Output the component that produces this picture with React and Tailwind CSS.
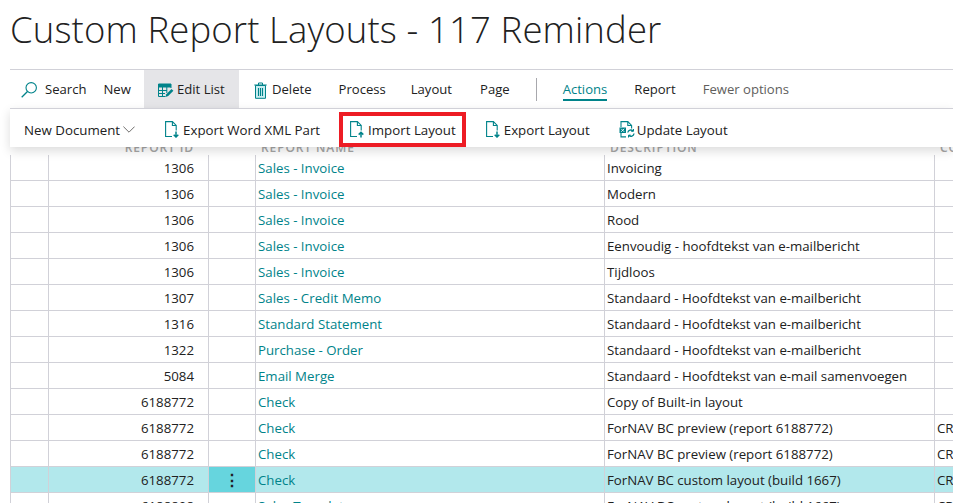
import React from 'react';

const rows = [
  ['1306', 'Sales - Invoice', 'Invoicing', ''],
  ['1306', 'Sales - Invoice', 'Modern', ''],
  ['1306', 'Sales - Invoice', 'Rood', ''],
  ['1306', 'Sales - Invoice', 'Eenvoudig - hoofdtekst van e-mailbericht', ''],
  ['1306', 'Sales - Invoice', 'Tijdloos', ''],
  ['1307', 'Sales - Credit Memo', 'Standaard - Hoofdtekst van e-mailbericht', ''],
  ['1316', 'Standard Statement', 'Standaard - Hoofdtekst van e-mailbericht', ''],
  ['1322', 'Purchase - Order', 'Standaard - Hoofdtekst van e-mailbericht', ''],
  ['5084', 'Email Merge', 'Standaard - Hoofdtekst van e-mail samenvoegen', ''],
  ['6188772', 'Check', 'Copy of Built-in layout', ''],
  ['6188772', 'Check', 'ForNAV BC preview (report 6188772)', 'CR'],
  ['6188772', 'Check', 'ForNAV BC preview (report 6188772)', 'CR'],
  ['6188772', 'Check', 'ForNAV BC custom layout (build 1667)', 'CR', true],
  ['6188808', 'Sales Template', 'ForNAV BC custom layout (build 1667)', 'CR'],
];

const SearchIcon = () => (
  <svg width="16" height="16" viewBox="0 0 16 16" fill="none" className="shrink-0 text-[#00838a]" stroke="currentColor" strokeWidth="1.100">
    <circle cx="10.200" cy="5.800" r="5.200" />
    <path d="M6.500 9.500L.7 15.300" strokeWidth="1.300" />
  </svg>
);

// page outline with a small arrow in the bottom right corner
const DocIcon = ({ up }) => (
  <svg width="14" height="17" viewBox="0 0 14 17" fill="none" className="shrink-0 text-[#00838a]" stroke="currentColor" strokeWidth="1.1">
    <path d="M7 15.500H.6V.6h6.800l3.800 3.800v5.100" />
    <path d="M7.400.8v3.700h3.700" />
    {up
      ? <path d="M11 16.500v-5M8.700 13.600L11 11.300l2.300 2.300" strokeWidth="1.500" />
      : <path d="M11 10.500v5.500M8.700 13.800L11 16l2.300-2.200" strokeWidth="1.500" />}
  </svg>
);

const UpdateIcon = () => (
  <svg width="16" height="17" viewBox="0 0 16 17" fill="none" className="shrink-0 text-[#00838a]" stroke="currentColor" strokeWidth="1.1">
    <path d="M2 6V.6h6.800l3.800 3.800v3M2 12v3.900h5" />
    <path d="M8.800.8v3.700h3.700" />
    <path d="M.5 6.500h6.500v5.500H.5z" fill="currentColor" stroke="none" />
    <path d="M2.200 7.800l3 3M5.200 7.800l-3 3" stroke="#fff" strokeWidth="0.900" />
    <path d="M8.800 11.500a3 3 0 0 1 5.200-1.500M15 12.500a3 3 0 0 1-5.200 1.800" strokeWidth="1.300" />
    <path d="M14.500 8v2.300h-2.300M9.500 16.500v-2.300h2.300" strokeWidth="1" />
  </svg>
);

const EditListIcon = () => (
  <svg width="16" height="15" viewBox="0 0 16 15" fill="none" className="shrink-0 text-[#00838a]" stroke="currentColor" strokeWidth="1">
    <path d="M.5 1h12.500v3H.5z" fill="currentColor" />
    <path d="M.5 4v9.500h7M.5 7.500h8.500M.5 10.500h6.500M4.500 4v9.500M8.800 4v6M13 4v1" />
    <path d="M7.500 14l.8-2.800 5.200-5.300 1.900 1.900-5.200 5.300z" fill="currentColor" stroke="none" />
  </svg>
);

const TrashIcon = () => (
  <svg width="13" height="17" viewBox="0 0 13 17" fill="none" className="shrink-0 text-[#00838a]" stroke="currentColor" strokeWidth="1">
    <path d="M1.500 3.500h10v12.800h-10z" fill="#c9eef1" />
    <path d="M.3 3h12.400M4.500 3V1h4v2" />
    <path d="M4.500 6v8M6.500 6v8M8.500 6v8" strokeWidth="1.100" />
  </svg>
);

const Chevron = () => (
  <svg width="12" height="7" viewBox="0 0 12 7" fill="none" className="ml-[3px] shrink-0 text-[#605e5c]" stroke="currentColor" strokeWidth="0.900">
    <path d="M.4.6L6 6.200 11.600.6" />
  </svg>
);

const Cell = ({ className = '', children }) => (
  <div className={`border-l border-[#d1d1d8] flex items-center whitespace-nowrap overflow-hidden ${className}`}>{children}</div>
);

const App = () => {
  return (
    <div className="h-[503px] w-[953px] overflow-hidden bg-white text-[#212121] text-[13.250px] font-['Open_Sans',sans-serif]">
      <h1 className="h-[69px] pl-[10px] pt-[5px] text-[36.500px] leading-[48px] font-light tracking-[0.130px] whitespace-nowrap">
        Custom Report Layouts - 117 Reminder
      </h1>

      <div className="ml-[10px] h-[39px] border-t border-[#d1d1d8] flex items-stretch text-[13.100px]">
        <div className="flex items-center pt-[2px] pl-[11px] w-[134px]">
          <SearchIcon />
          <span className="ml-[8px]">Search</span>
          <span className="ml-[17px]">New</span>
        </div>
        <div className="flex items-center pt-[2px] w-[95px] pl-[14px] bg-[#e5e5e8]">
          <EditListIcon />
          <span className="ml-[3px]">Edit List</span>
        </div>
        <div className="flex items-center pt-[2px] pl-[15px]">
          <TrashIcon />
          <span className="ml-[5px]">Delete</span>
        </div>
        <div className="flex items-center pt-[2px] ml-[27px]">Process</div>
        <div className="flex items-center pt-[2px] ml-[25px]">Layout</div>
        <div className="flex items-center pt-[2px] ml-[28px]">Page</div>
        <div className="self-center ml-[26px] h-[23px] w-px bg-[#a8a8ad]" />
        <div className="relative flex items-center pt-[2px] ml-[26px] text-[#00838a]">
          Actions
          <div className="absolute left-0 right-0 top-[29px] h-[2px] bg-[#00838a]" />
        </div>
        <div className="flex items-center pt-[2px] ml-[27px]">Report</div>
        <div className="flex items-center pt-[2px] ml-[27px] text-[#605e5c]">Fewer options</div>
      </div>

      <div className="relative z-10 ml-[10px] h-[39px] pt-[3px] bg-white border-t border-[#d1d1d8] shadow-[0_4px_10px_rgba(0,0,0,0.14)] flex items-center text-[13.300px] leading-[20px]">
        <span className="ml-[14px]">New Document</span>
        <Chevron />
        <div className="ml-[30px] flex items-center gap-[4px]">
          <DocIcon />
          <span>Export Word XML Part</span>
        </div>
        <div className="relative ml-[30px] flex items-center gap-[4px]">
          <DocIcon up />
          <span>Import Layout</span>
          <div className="absolute -left-[11px] -right-[10px] -top-[7.500px] h-[35px] border-[4px] border-[#ed1c24]" />
        </div>
        <div className="ml-[30px] flex items-center gap-[4px]">
          <DocIcon />
          <span>Export Layout</span>
        </div>
        <div className="ml-[29px] flex items-center gap-[2px]">
          <UpdateIcon />
          <span>Update Layout</span>
        </div>
      </div>

      <div className="-mt-[22px] ml-[10px]">
        <div className="grid grid-cols-[38px_160px_47px_349px_330px_1fr] h-[30px] text-[12px] text-[#a6a6a6] font-semibold tracking-[0.900px]">
          <Cell className="border-l-0" />
          <Cell className="border-l-0 pt-[15px] justify-end pr-[14px]">REPORT ID</Cell>
          <Cell className="border-l-0" />
          <Cell className="border-l-0 pt-[15px] pl-[6px]">REPORT NAME</Cell>
          <Cell className="border-l-0 pt-[15px] pl-[6px]">DESCRIPTION</Cell>
          <Cell className="border-l-0 pt-[15px] pl-[6px]">CO</Cell>
        </div>
        {rows.map((row, i) => (
          <div
            key={i}
            className={`grid grid-cols-[38px_160px_47px_349px_330px_1fr] h-[26px] border-b border-[#d1d1d8] ${row[4] ? 'bg-[#b2e8ec]' : ''}`}
          >
            <Cell />
            <Cell className="pt-[2px] justify-end pr-[14px]">{row[0]}</Cell>
            <Cell className={`justify-center text-[16px] font-bold ${row[4] ? 'bg-[#66d5de]' : ''}`}>{row[4] ? '⋮' : ''}</Cell>
            <Cell className="pt-[2px] pl-[2px] text-[#00838a]">{row[1]}</Cell>
            <Cell className="pt-[2px] pl-[2px]">{row[2]}</Cell>
            <Cell className="pt-[2px] pl-[2px]">{row[3]}</Cell>
          </div>
        ))}
      </div>
    </div>
  );
};

export default App;
